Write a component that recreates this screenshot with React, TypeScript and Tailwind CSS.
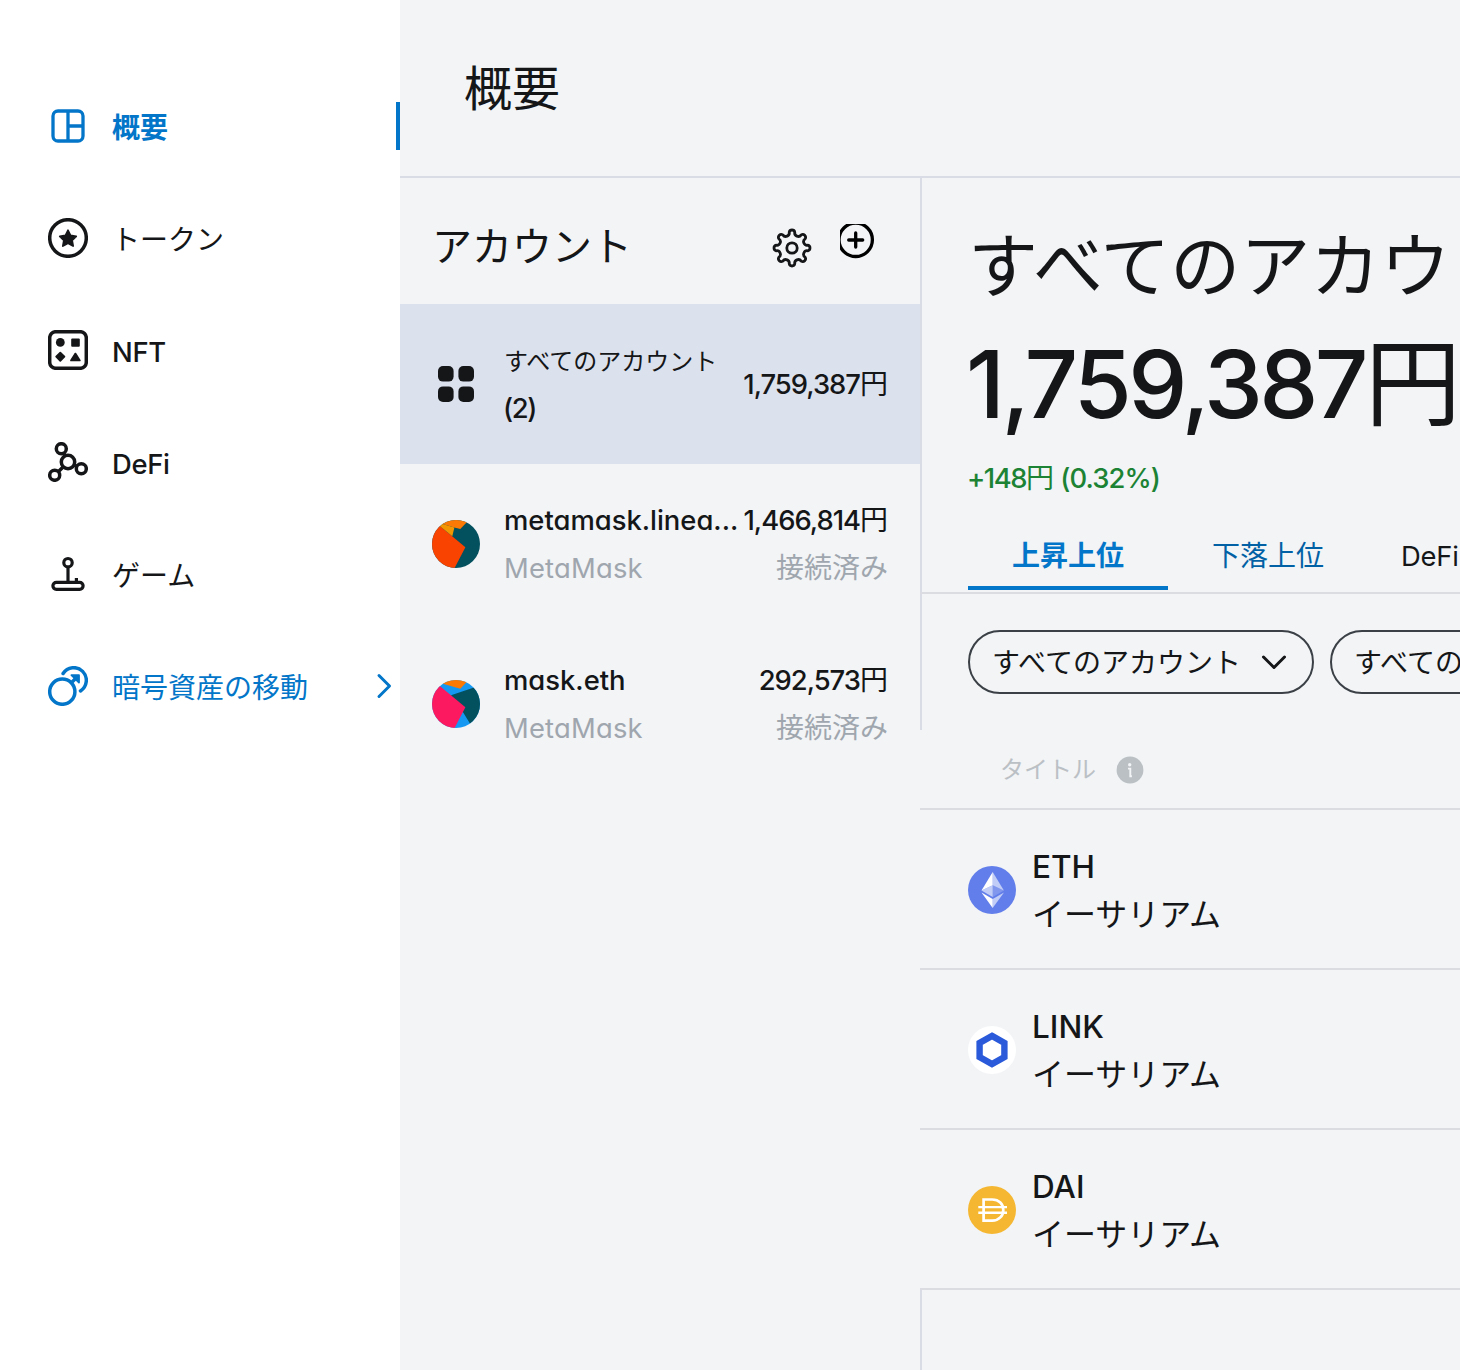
import type { ReactNode } from "react";
import clsx from "clsx";

interface NavItem {
  label: string;
  icon: ReactNode;
  latin?: boolean;
  active?: boolean;
  link?: boolean;
}

interface Account {
  name: string;
  wallet: string;
  status: string;
  balance: string;
  avatar: ReactNode;
}

interface Token {
  symbol: string;
  network: string;
  icon: ReactNode;
}

const iconProps = {
  width: 40,
  height: 40,
  viewBox: "0 0 40 40",
  fill: "none",
  stroke: "currentColor",
  strokeWidth: 3.5,
  className: "shrink-0",
};

const OverviewIcon = () => (
  <svg {...iconProps} strokeWidth="3.3">
    <rect x="5" y="5" width="30" height="30" rx="5" />
    <path d="M20 5v30M20 20h15" />
  </svg>
);

const TokenIcon = () => (
  <svg {...iconProps}>
    <circle cx="20" cy="20" r="18.3" />
    <path
      d="M20 12.3l2.5 5.2 5.7.8-4.1 4 1 5.7-5.1-2.7-5.1 2.7 1-5.7-4.1-4 5.7-.8z"
      fill="currentColor"
      strokeWidth="1.8"
      strokeLinejoin="round"
    />
  </svg>
);

const NftIcon = () => (
  <svg {...iconProps}>
    <rect x="1.7" y="1.7" width="36.6" height="36.6" rx="6" />
    <g fill="currentColor" stroke="none">
      <circle cx="12.3" cy="12.4" r="4.4" />
      <rect x="23.2" y="8.4" width="8.6" height="8.4" rx="1" />
    </g>
    <path
      d="M12.3 22.6l4.1 4.1-4.1 4.1-4.1-4.1zM27.4 23.6l4.4 6.8h-8.8z"
      fill="currentColor"
      strokeWidth="1.8"
      strokeLinejoin="round"
    />
  </svg>
);

const DefiIcon = () => (
  <svg {...iconProps}>
    <circle cx="13.3" cy="6.7" r="5" />
    <circle cx="20" cy="20" r="6.7" />
    <circle cx="6.7" cy="33.3" r="5" />
    <circle cx="33.3" cy="26.7" r="5" />
    <path d="M15.6 11.2l1.6 3M26 23l2.8 1.4M15.3 24.7l-5 5" />
  </svg>
);

const GameIcon = () => (
  <svg {...iconProps} strokeWidth="3.2">
    <circle cx="20" cy="8.7" r="4.2" />
    <path d="M20 13v15" />
    <path d="M28.4 24v4" />
    <rect x="4.9" y="28.4" width="30.2" height="6.9" rx="3.45" />
  </svg>
);

const MoveIcon = () => (
  <svg {...iconProps}>
    <circle cx="14.3" cy="25.7" r="12.6" />
    <path d="M15.1 7.5a12.6 12.6 0 1 1 17.4 17.4" strokeLinecap="round" />
    <path d="M22.6 17.4l5-5" />
    <path
      d="M23.4 9.2h7.6v7.4z"
      fill="currentColor"
      strokeWidth="1.8"
      strokeLinejoin="round"
    />
  </svg>
);

const ChevronRight = () => (
  <svg
    width="16"
    height="28"
    viewBox="0 0 16 28"
    fill="none"
    stroke="currentColor"
    strokeWidth="3"
    strokeLinecap="round"
    strokeLinejoin="round"
  >
    <path d="M3 3.5l10.5 10.5-10.5 10.5" />
  </svg>
);

const ChevronDown = () => (
  <svg
    width="26"
    height="16"
    viewBox="0 0 26 16"
    fill="none"
    stroke="currentColor"
    strokeWidth="3"
    strokeLinecap="round"
    strokeLinejoin="round"
  >
    <path d="M2.5 3l10.5 10.5L23.5 3" />
  </svg>
);

// eight rounded teeth joined by shallow concave valleys
const gearPath = () => {
  const at = (deg: number) => {
    const a = (deg * Math.PI) / 180;
    return `${(20 + 16 * Math.cos(a)).toFixed(2)} ${(20 + 16 * Math.sin(a)).toFixed(2)}`;
  };
  let d = `M${at(-10)}`;
  for (let i = 0; i < 8; i++) {
    const t = i * 45;
    d += `A2.85 2.85 0 0 1 ${at(t + 10)}A3.55 3.55 0 0 0 ${at(t + 35)}`;
  }
  return `${d}Z`;
};

const GearIcon = () => (
  <svg {...iconProps} strokeWidth="2.8" strokeLinejoin="round">
    <path d={gearPath()} />
    <circle cx="20" cy="20" r="5.2" />
  </svg>
);

const AddIcon = () => (
  <svg
    width="36"
    height="36"
    viewBox="0 0 36 36"
    fill="none"
    stroke="#000"
    strokeWidth="3.3"
    className="overflow-hidden"
  >
    <circle cx="15.7" cy="15.8" r="16.7" />
    <path d="M15.7 9v14M8.7 16h14" strokeLinecap="round" />
  </svg>
);

const GridIcon = () => (
  <svg width="36" height="36" viewBox="0 0 36 36" fill="currentColor">
    <rect width="15.6" height="15.6" rx="5" />
    <rect x="20.4" width="15.6" height="15.6" rx="5" />
    <rect y="20.4" width="15.6" height="15.6" rx="5" />
    <rect x="20.4" y="20.4" width="15.6" height="15.6" rx="5" />
  </svg>
);

const InfoIcon = () => (
  <svg width="28" height="28" viewBox="0 0 28 28">
    <circle cx="14" cy="14" r="13.4" fill="#bbc0c5" />
    <circle cx="13.7" cy="8.7" r="1.7" fill="#f2f4f6" />
    <path
      d="M12 12.6h2.3v7.6h1.6"
      fill="none"
      stroke="#f2f4f6"
      strokeWidth="1.9"
    />
  </svg>
);

const LineaAvatar = () => (
  <svg
    width="48"
    height="48"
    viewBox="0 0 48 48"
    className="rounded-full shrink-0"
  >
    <rect width="48" height="48" fill="#03505e" />
    <path d="M9 3.5L22.4 7.6 28.3 9 36 1V0H9z" fill="#fb7a06" />
    <path d="M0 0l9.3 7.3 24.1 20L22.6 48H0z" fill="#f94301" />
    <path d="M5 3.8l4.3 3.5 11 9 2.1-8.7L9 3.5z" fill="#f29602" />
  </svg>
);

const MaskAvatar = () => (
  <svg
    width="48"
    height="48"
    viewBox="0 0 48 48"
    className="rounded-full shrink-0"
  >
    <rect width="48" height="48" fill="#1598f2" />
    <path d="M19 15.3L48 5.6V48h-7.3L30.3 31z" fill="#03505e" />
    <path d="M11 3.8l17.3 5L36 .6V0H11z" fill="#fb7a06" />
    <path d="M0 0l9.3 7.3 24.1 20L22.6 48H0z" fill="#fc1960" />
  </svg>
);

const EthLogo = () => (
  <svg width="48" height="48" viewBox="0 0 48 48" className="shrink-0">
    <circle cx="24" cy="24" r="24" fill="#627eea" />
    <g fill="#fff">
      <path d="M24.7 6v13.3l11.2 5.3z" fillOpacity=".602" />
      <path d="M24.7 6L13.5 24.6l11.2-5.3z" />
      <path d="M24.7 32.9V42l11.3-15.5z" fillOpacity=".602" />
      <path d="M24.7 42v-9.1l-11.2-6.4z" />
      <path d="M24.7 30.9l11.2-6.3-11.2-5.3z" fillOpacity=".2" />
      <path d="M13.5 24.6l11.2 6.3V19.3z" fillOpacity=".602" />
    </g>
  </svg>
);

const LinkLogo = () => (
  <svg width="48" height="48" viewBox="0 0 48 48" className="shrink-0">
    <circle cx="24" cy="24" r="24" fill="#fff" />
    <path
      d="M24 9.9l12.4 7v14.2L24 38.1l-12.4-7V16.9z"
      fill="none"
      stroke="#2a5ada"
      strokeWidth="6.4"
    />
  </svg>
);

const DaiLogo = () => (
  <svg width="48" height="48" viewBox="0 0 48 48" className="shrink-0">
    <circle cx="24" cy="24" r="24" fill="#f5b731" />
    <g fill="none" stroke="#fff" strokeWidth="2.7">
      <path d="M15.6 13.5h8.6c6.9 0 11.1 4.7 11.1 10.4S31.1 34.7 24.2 34.7h-8.6z" />
      <path d="M10.3 21.1H39M10.3 26.8H39" strokeWidth="2.4" />
    </g>
  </svg>
);

const NAV: NavItem[] = [
  { label: "概要", icon: <OverviewIcon />, active: true },
  { label: "トークン", icon: <TokenIcon /> },
  { label: "NFT", icon: <NftIcon />, latin: true },
  { label: "DeFi", icon: <DefiIcon />, latin: true },
  { label: "ゲーム", icon: <GameIcon /> },
  { label: "暗号資産の移動", icon: <MoveIcon />, link: true },
];

const ACCOUNTS: Account[] = [
  {
    name: "metamask.linea...",
    wallet: "MetaMask",
    status: "接続済み",
    balance: "1,466,814",
    avatar: <LineaAvatar />,
  },
  {
    name: "mask.eth",
    wallet: "MetaMask",
    status: "接続済み",
    balance: "292,573",
    avatar: <MaskAvatar />,
  },
];

const TOKENS: Token[] = [
  { symbol: "ETH", network: "イーサリアム", icon: <EthLogo /> },
  { symbol: "LINK", network: "イーサリアム", icon: <LinkLogo /> },
  { symbol: "DAI", network: "イーサリアム", icon: <DaiLogo /> },
];

const Yen = ({ value }: { value: string }) => (
  <span className="flex items-baseline whitespace-nowrap text-[28px] leading-[48px]">
    <span className="font-medium text-[27.4px] tracking-[-1px]">{value}</span>
    <span>円</span>
  </span>
);

function Sidebar() {
  return (
    <nav className="w-[400px] shrink-0 bg-white pt-[102px] flex flex-col gap-16">
      {NAV.map((item) => (
        <div
          key={item.label}
          className={clsx(
            "h-12 pl-12 flex items-center text-[28px] leading-[48px]",
            item.active && "border-r-4 border-[#0376c9] font-bold",
            item.active || item.link ? "text-[#0376c9]" : "text-[#141618]",
          )}
        >
          {item.icon}
          <span
            className={clsx(
              "ml-6 pt-1",
              item.latin && "font-medium text-[27.4px] tracking-[-0.3px]",
            )}
          >
            {item.label}
          </span>
          {item.link && (
            <span className="ml-auto mr-2">
              <ChevronRight />
            </span>
          )}
        </div>
      ))}
    </nav>
  );
}

function Accounts() {
  return (
    <section className="w-[520px] shrink-0">
      <div className="h-[126px] pl-8 flex">
        <h2 className="w-[340px] pt-[41px] text-[40px] leading-[56px]">
          アカウント
        </h2>
        <div className="pt-[50px]">
          <GearIcon />
        </div>
        <div className="pt-[46px] ml-7">
          <AddIcon />
        </div>
      </div>

      <div className="h-40 px-8 flex items-center bg-[#dce1ee]">
        <div className="w-[72px] pl-1.5">
          <GridIcon />
        </div>
        <div className="flex-1 leading-[48px]">
          <p className="pt-[3px] text-[24px] leading-[45px] whitespace-nowrap">
            すべてのアカウント
          </p>
          <p className="-ml-px font-medium text-[27.4px] tracking-[-1.4px]">
            (2)
          </p>
        </div>
        <Yen value="1,759,387" />
      </div>

      {ACCOUNTS.map((account) => (
        <div key={account.name} className="h-40 px-8 flex items-center">
          {account.avatar}
          <div className="ml-6 flex-1 text-[28px] leading-[48px]">
            <div className="flex justify-between">
              <span className="font-medium text-[27.4px]">{account.name}</span>
              <Yen value={account.balance} />
            </div>
            <div className="flex justify-between text-[#9fa6ae]">
              <span className="text-[27.4px] tracking-[0.2px]">
                {account.wallet}
              </span>
              <span>{account.status}</span>
            </div>
          </div>
        </div>
      ))}
    </section>
  );
}

function FilterPill({ label }: { label: string }) {
  return (
    <button className="h-16 w-[346px] shrink-0 pl-[22px] pr-[25px] flex items-center justify-between rounded-full border-2 border-[#3b4046] text-[28px] whitespace-nowrap">
      <span className="pt-px">{label}</span>
      <ChevronDown />
    </button>
  );
}

function Portfolio() {
  return (
    <section className="w-[540px] shrink-0 border-l-2 border-[#dadce5] -mt-0.5 pt-0.5 flex flex-col">
      <div className="h-[342px] pl-[46px] whitespace-nowrap">
        <h2 className="pt-[39px] text-[70px] leading-[100px]">
          すべてのアカウント
        </h2>
        <p className="h-[135px] flex items-baseline text-[96px] leading-[133px]">
          <span className="-ml-0.5 text-[94px] font-medium tracking-[-3.6px]">
            1,759,387
          </span>
          <span>円</span>
        </p>
        <p className="pt-1 text-[28px] leading-[44px] text-[#1c8234]">
          <span className="-ml-px font-medium text-[27.4px] tracking-[-1.5px]">
            +148
          </span>
          円
          <span className="font-medium text-[27.4px] tracking-[-0.9px]">
            {" "}
            (0.32%)
          </span>
        </p>
      </div>

      <div className="h-[74px] -ml-0.5 pl-12 flex items-start border-b-2 border-[#dadce1] text-[28px] leading-[73px] whitespace-nowrap">
        <span className="h-[70px] w-[200px] shrink-0 text-center font-bold text-[#0376c9] border-b-4 border-[#0376c9]">
          上昇上位
        </span>
        <span className="w-[200px] shrink-0 text-center text-[#0260a4]">
          下落上位
        </span>
        <span className="pl-[33px] text-[27.4px] tracking-[-0.2px]">DeFi</span>
      </div>

      <div className="h-[136px] pt-9 pl-[46px] flex gap-4">
        <FilterPill label="すべてのアカウント" />
        <FilterPill label="すべてのネットワーク" />
      </div>

      {/* the table covers the panel's left rule */}
      <div className="-ml-0.5 h-[560px] relative bg-[#f2f4f6]">
        <div className="h-20 pt-0.5 pl-20 flex items-center gap-5 border-b-2 border-[#dadce1] text-[24px] text-[#bbc0c5]">
          <span>タイトル</span>
          <InfoIcon />
        </div>
        {TOKENS.map((token) => (
          <div
            key={token.symbol}
            className="h-40 pt-0.5 pl-12 flex items-center gap-4 border-b-2 border-[#dadce1]"
          >
            {token.icon}
            <div className="pt-0.5 text-[32px] leading-[48px]">
              <p className="font-medium text-[31.5px]">{token.symbol}</p>
              <p>{token.network}</p>
            </div>
          </div>
        ))}
      </div>
    </section>
  );
}

export default function App() {
  return (
    <div className="w-[1460px] h-[1370px] overflow-hidden flex bg-[#f2f4f6] text-[#141618] font-[Inter,'Noto_Sans_CJK_JP',sans-serif] [font-feature-settings:'cv11']">
      <Sidebar />
      <main className="w-[1060px] flex flex-col">
        <header className="h-[178px] shrink-0 pl-16 pt-px flex items-center border-b-2 border-[#dadce5]">
          <h1 className="text-[48px] leading-[64px]">概要</h1>
        </header>
        <div className="flex-1 flex">
          <Accounts />
          <Portfolio />
        </div>
      </main>
    </div>
  );
}
